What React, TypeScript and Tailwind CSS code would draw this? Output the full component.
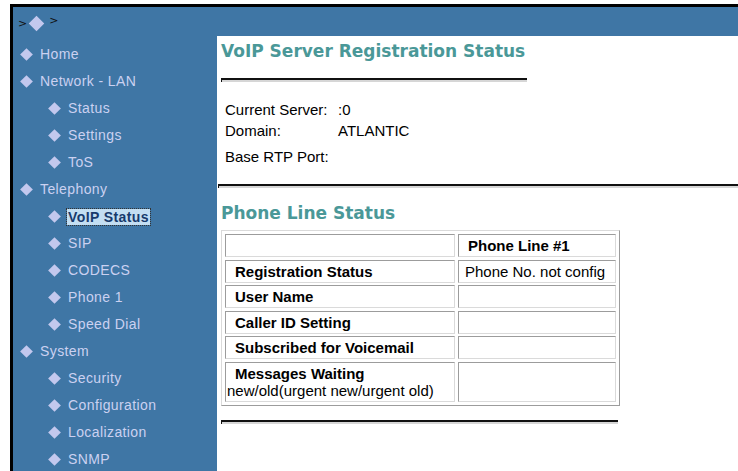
import React from "react";

type NavItem = { label: string; sub?: boolean; active?: boolean };

const navItems: NavItem[] = [
  { label: "Home" },
  { label: "Network - LAN" },
  { label: "Status", sub: true },
  { label: "Settings", sub: true },
  { label: "ToS", sub: true },
  { label: "Telephony" },
  { label: "VoIP Status", sub: true, active: true },
  { label: "SIP", sub: true },
  { label: "CODECS", sub: true },
  { label: "Phone 1", sub: true },
  { label: "Speed Dial", sub: true },
  { label: "System" },
  { label: "Security", sub: true },
  { label: "Configuration", sub: true },
  { label: "Localization", sub: true },
  { label: "SNMP", sub: true },
];

const lineRows = [
  { label: "Registration Status", value: "Phone No. not config" },
  { label: "User Name", value: "" },
  { label: "Caller ID Setting", value: "" },
  { label: "Subscribed for Voicemail", value: "" },
];

const Diamond = ({ className = "w-[9px] h-[9px]" }: { className?: string }) => (
  <span className={`block shrink-0 rotate-45 bg-[#c3c8ee] ${className}`} />
);

// old-style 3d rule
const Rule = ({ className = "" }: { className?: string }) => (
  <div className={`h-[4px] border-t-2 border-l border-[#111] bg-[#d6d6d6] ${className}`} />
);

const cell =
  "border border-t-[#9c9c9c] border-l-[#9c9c9c] border-r-[#dadada] border-b-[#dadada] px-[2px] py-[2px] leading-[17px]";

const Sidebar = () => (
  <div className="w-[204px] shrink-0 pt-[5px] font-['Liberation_Sans',Arial,sans-serif] text-[14px] tracking-[0.4px] text-[#cbd1f1]">
    {navItems.map((item) => (
      <div
        key={item.label}
        className={`flex h-[27px] items-center ${item.sub ? "pl-[37px]" : "pl-[9px]"}`}
      >
        <Diamond />
        {item.active ? (
          <span className="ml-[8px] bg-[#c3def2] px-[1px] font-bold leading-[16px] text-[#173a6c] outline-1 outline-dotted outline-[#333]">
            VoIP Status
          </span>
        ) : (
          <span className="ml-[9px] leading-[27px]">{item.label}</span>
        )}
      </div>
    ))}
  </div>
);

const Heading = ({ children, className = "" }: { children: React.ReactNode; className?: string }) => (
  <h1
    className={`font-['DejaVu_Sans',Verdana,sans-serif] text-[17px] font-bold leading-[20px] text-[#4a9898] ${className}`}
  >
    {children}
  </h1>
);

const Content = () => (
  <div className="flex-1 bg-white pl-[4px] pt-[5px] font-['Liberation_Sans',Arial,sans-serif] text-[15px] text-black">
    <Heading>VoIP Server Registration Status</Heading>
    <Rule className="mt-[17px] w-[306px]" />

    <div className="mt-[19px] grid grid-cols-[113px_auto] pl-[4px] leading-[17px]">
      <span className="h-[21px]">Current Server:</span>
      <span>:0</span>
      <span className="h-[26px]">Domain:</span>
      <span>ATLANTIC</span>
      <span className="h-[17px]">Base RTP Port:</span>
      <span />
    </div>

    <Rule className="-ml-[3px] mt-[19px]" />

    <Heading className="mt-[15px]">Phone Line Status</Heading>

    <div className="mt-[7px] grid w-fit grid-cols-[230px_158px] gap-x-[3px] gap-y-[2.5px] border border-t-[#dadada] border-l-[#dadada] border-r-[#9c9c9c] border-b-[#9c9c9c] p-[3px]">
      <div className={`${cell} h-[23px]`} />
      <div className={`${cell} h-[23px] pl-[9px] font-bold`}>Phone Line #1</div>
      {lineRows.map((row) => (
        <React.Fragment key={row.label}>
          <div className={`${cell} h-[23px] pl-[9px] font-bold`}>{row.label}</div>
          <div className={`${cell} h-[23px] overflow-hidden whitespace-nowrap pl-[6px]`}>{row.value}</div>
        </React.Fragment>
      ))}
      <div className={`${cell} h-[40px] pl-[1px]`}>
        <div className="pl-[8px] font-bold">Messages Waiting</div>
        <div>new/old(urgent new/urgent old)</div>
      </div>
      <div className={`${cell} h-[40px]`} />
    </div>

    <Rule className="mt-[14px] w-[397px]" />
  </div>
);

export default function App() {
  return (
    <div className="h-[471px] w-[738px] overflow-hidden bg-white pl-[10px] pt-[4px]">
      <div className="flex h-full flex-col border-l-[3px] border-t-[3px] border-black bg-[#3f76a5]">
        <div className="flex h-[29px] shrink-0 items-center pl-[5px] font-['DejaVu_Sans',sans-serif] text-[11px] text-[#111]">
          <span className="translate-y-[3px]">&gt;</span>
          <Diamond className="ml-[4px] mr-[7px] h-[11px] w-[11px] translate-y-[2px]" />
          <span className="translate-y-[0px]">&gt;</span>
        </div>
        <div className="flex flex-1">
          <Sidebar />
          <Content />
        </div>
      </div>
    </div>
  );
}
